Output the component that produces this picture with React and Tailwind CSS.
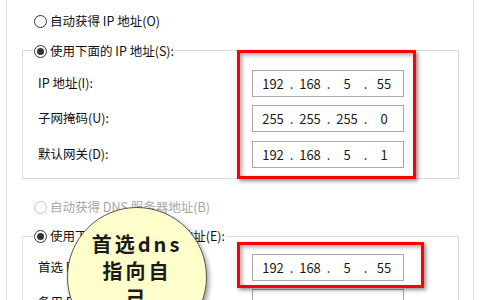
import React from 'react';

function Radio({ checked, disabled }) {
  return (
    <span
      className={`flex h-[13px] w-[13px] shrink-0 items-center justify-center rounded-full border bg-white ${
        disabled ? 'border-[#c4c4c4]' : 'border-[#333333]'
      }`}
    >
      {checked && <span className="h-[7px] w-[7px] rounded-full bg-[#333333]" />}
    </span>
  );
}

function IpBox({ parts }) {
  return (
    <div className="flex h-[27px] w-[152px] items-center border border-[#a8a8a8] bg-white pl-[5px] text-[13px] text-[#1a1a1a]">
      {parts.map((p, i) => (
        <React.Fragment key={i}>
          {i > 0 && <span className="w-[7px] text-center">.</span>}
          <span className="w-[30px] text-center">{p}</span>
        </React.Fragment>
      ))}
    </div>
  );
}

function Row({ label, parts, className }) {
  return (
    <div className={`flex h-[27px] items-center pl-[15px] ${className}`}>
      <span className="w-[214px]">{label}</span>
      <IpBox parts={parts} />
    </div>
  );
}

function Legend({ text, className }) {
  return (
    <div className={`ml-[10px] flex h-[16px] w-fit items-center bg-white px-[1px] ${className}`}>
      <Radio checked />
      <span className="ml-[3px]">{text}</span>
    </div>
  );
}

export default function App() {
  return (
    <div className="relative h-[300px] w-[480px] overflow-hidden bg-white font-['Noto_Sans_CJK_SC','Noto_Sans',sans-serif] text-[12.5px] text-[#111111]">
      <div className="ml-[6px] h-full w-[468px] border-x border-[#dedede] pt-[13px]">
        <div className="flex h-[16px] items-center pl-[27px]">
          <Radio />
          <span className="ml-[3px]">自动获得 IP 地址(O)</span>
        </div>

        <div className="ml-[15px] mt-[21px] w-[437px] border border-[#dcdcdc] pb-[10px]">
          <Legend text="使用下面的 IP 地址(S):" className="-mt-[8px]" />
          <Row label="IP 地址(I):" parts={['192', '168', '5', '55']} className="mt-[11px]" />
          <Row label="子网掩码(U):" parts={['255', '255', '255', '0']} className="mt-[8px]" />
          <Row label="默认网关(D):" parts={['192', '168', '5', '1']} className="mt-[9px]" />
        </div>

        <div className="mt-[20px] flex h-[16px] items-center pl-[27px] text-[#a6a6a6]">
          <Radio disabled />
          <span className="ml-[3px]">自动获得 DNS 服务器地址(B)</span>
        </div>

        <div className="ml-[15px] mt-[21px] w-[437px] border border-[#dcdcdc] pb-[10px]">
          <Legend text="使用下面的 DNS 服务器地址(E):" className="-mt-[9px]" />
          <Row label="首选 DNS 服务器(P):" parts={['192', '168', '5', '55']} className="mt-[10px]" />
          <Row label="备用 DNS 服务器(A):" parts={['', '', '', '']} className="mt-[8px]" />
        </div>
      </div>

      {/* red annotation boxes */}
      <div className="absolute left-[237px] top-[50px] h-[129px] w-[179px] border-[3px] border-[#ff0000] shadow-[2px_2px_4px_rgba(0,0,0,0.45),inset_2px_2px_4px_rgba(0,0,0,0.35)]" />
      <div className="absolute left-[237px] top-[242px] h-[46px] w-[187px] border-[3px] border-[#ff0000] shadow-[2px_2px_4px_rgba(0,0,0,0.45),inset_2px_2px_4px_rgba(0,0,0,0.35)]" />

      {/* callout bubble */}
      <div className="absolute left-[67px] top-[207px] flex h-[140px] w-[140px] flex-col items-center rounded-full border border-[#555555] bg-[#ffffcc] pt-[22px] text-[20px] font-bold leading-[27px] tracking-[3px] text-[#1a1a1a] shadow-[2px_3px_5px_rgba(0,0,0,0.4)]">
        <span>首选dns</span>
        <span>指向自</span>
        <span>己</span>
      </div>
    </div>
  );
}
